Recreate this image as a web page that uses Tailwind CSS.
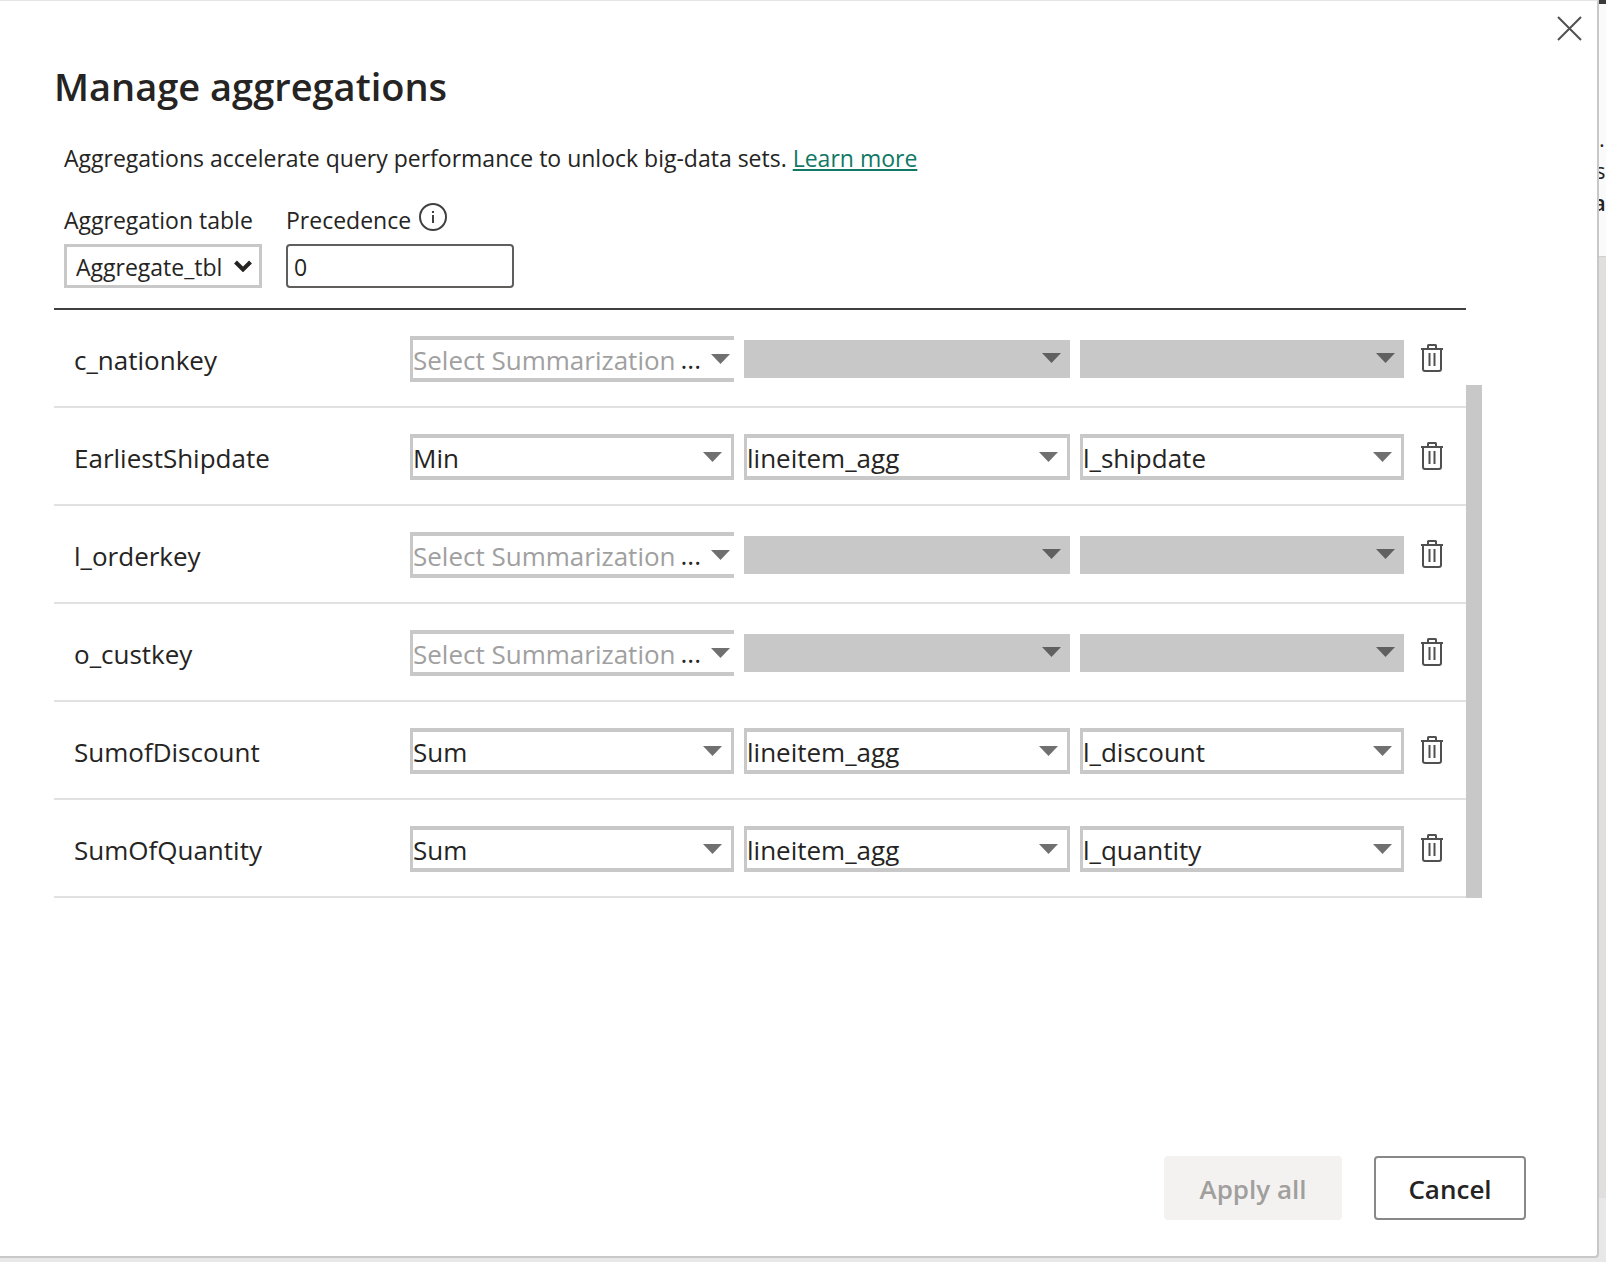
<!DOCTYPE html>
<html lang="en">
<head>
<meta charset="utf-8">
<title>Manage aggregations</title>
<script src="https://cdn.jsdelivr.net/npm/@tailwindcss/browser@4"></script>
</head>
<body class="bg-[#e8e8e8] font-['Open_Sans','Noto_Sans',sans-serif] text-[#252423]">
<svg class="hidden" aria-hidden="true">
  <symbol id="arrow" viewBox="0 0 19 10"><path d="M0 0h19L9.500 10z" fill="currentColor"/></symbol>
  <symbol id="trash" viewBox="0 0 22 28"><path d="M0 5H22M7 5V1.500Q7 1 7.500 1H14.500Q15 1 15 1.500V5M2 5V25Q2 27 4 27H18Q20 27 20 25V5M8.500 9V22M13.500 9V22" fill="none" stroke="currentColor" stroke-width="2"/></symbol>
</svg>
<div class="flex min-h-screen pb-1">
  <main role="dialog" aria-labelledby="title" class="flex min-w-0 flex-1 flex-col rounded-br border-t border-r-2 border-b-2 border-t-[#e5e5e5] border-r-[#c8c8c8] border-b-[#c8c8c8] bg-white">
    <div class="flex h-[59px] justify-end pt-[15px] pr-[15px]">
      <button type="button" aria-label="Close" class="size-[25px] text-[#505050]">
        <svg viewBox="0 0 25 25" class="size-full" fill="none" stroke="currentColor" stroke-width="2"><path d="M1 1L24 24M24 1L1 24"/></svg>
      </button>
    </div>
    <h1 id="title" class="px-[54px] text-[38px] leading-[52px] font-semibold">Manage aggregations</h1>
    <p class="mt-[30px] px-16 text-[23px] leading-8">Aggregations accelerate query performance to unlock big-data sets. <a href="#" class="text-[#117865] underline">Learn more</a></p>
    <div class="mt-[27px] flex gap-6 px-16 text-[23px]">
      <div class="flex w-[198px] flex-col">
        <label for="table" class="leading-[38px] whitespace-nowrap">Aggregation table</label>
        <div class="relative mt-[5px] h-11">
          <select id="table" class="size-full appearance-none border-3 border-[#c8c8c8] bg-white pt-0.5 pl-[9px]"><option>Aggregate_tbl</option></select>
          <svg viewBox="0 0 18 12" class="pointer-events-none absolute top-4 right-2.5 h-3 w-[18px]" fill="none" stroke="currentColor" stroke-width="4"><path d="M1.500 2L9 9.500L16.500 2"/></svg>
        </div>
      </div>
      <div class="flex w-[228px] flex-col">
        <div class="flex h-[38px] items-start gap-2">
          <label for="precedence" class="leading-[38px]">Precedence</label>
          <svg viewBox="0 0 28 28" class="mt-0.5 size-7 text-[#404040]" fill="none" stroke="currentColor" stroke-width="2"><circle cx="14" cy="14" r="13"/><path d="M14 12V20M14 8V10"/></svg>
        </div>
        <input id="precedence" value="0" class="mt-[5px] h-11 w-full rounded-sm border-2 border-[#605e5c] bg-white px-1.5 pt-0.5">
      </div>
    </div>
    <section class="mt-5 flex pr-[115px] pl-[54px]">
      <table class="min-w-0 flex-1 table-fixed border-t-2 border-[#404040] text-[26px]">
        <colgroup><col><col class="w-[334px]"><col class="w-[336px]"><col class="w-[324px]"><col class="w-[62px]"></colgroup>
        <tbody id="rows"></tbody>
      </table>
      <div class="w-4 pt-[77px]"><div class="h-full bg-[#c8c8c8]"></div></div>
    </section>
    <footer class="mt-auto flex justify-end gap-8 pr-[71px] pb-9 text-[26px] font-semibold">
      <button type="button" disabled class="h-16 w-[178px] rounded bg-[#f3f2f1] pt-0.5 text-[#a19f9d]">Apply all</button>
      <button type="button" class="h-16 w-[152px] rounded border-2 border-[#8a8886] bg-white pt-0.5">Cancel</button>
    </footer>
  </main>
  <aside aria-hidden="true" class="flex w-[7px] flex-col overflow-hidden bg-[#e1dfdd]">
    <div class="h-1 bg-[#3b3a39]"></div>
    <div class="h-[253px] border-b border-[#d0d0d0] bg-[#fafafa] pt-[118px] text-[22px] leading-8">
      <p>.</p>
      <p class="-ml-1 whitespace-nowrap">si</p>
      <p class="-ml-1.5 font-semibold">a</p>
    </div>
    <div class="mt-auto h-[60px] bg-[#e8e8e8]"></div>
  </aside>
</div>
<script>
  const rows = [
    ['c_nationkey'],
    ['EarliestShipdate', 'Min', 'lineitem_agg', 'l_shipdate'],
    ['l_orderkey'],
    ['o_custkey'],
    ['SumofDiscount', 'Sum', 'lineitem_agg', 'l_discount'],
    ['SumOfQuantity', 'Sum', 'lineitem_agg', 'l_quantity'],
  ];
  const arrow = '<svg class="h-2.5 w-[19px]"><use href="#arrow"/></svg>';
  const filled = (label, value) => `<div class="relative h-[46px]"><select aria-label="${label}" class="size-full appearance-none border-x-3 border-y-4 border-[#c8c8c8] bg-white pt-px"><option>${value}</option></select><span class="pointer-events-none absolute top-[18px] right-3 text-[#707070]">${arrow}</span></div>`;
  const empty = (label) => `<div class="relative h-[46px]"><select aria-label="${label}" class="size-full appearance-none border-y-4 border-l-3 border-[#c8c8c8] bg-white pt-px text-[#a0a0a0]"><option>Select Summarization</option></select><span class="pointer-events-none absolute inset-y-0 right-1 flex items-center gap-2.5 text-[#707070]"><span class="text-[#252423]">...</span>${arrow}</span></div>`;
  const disabled = (label) => `<div class="relative h-[38px]"><select aria-label="${label}" disabled class="size-full appearance-none bg-[#c8c8c8] opacity-100"><option></option></select><span class="pointer-events-none absolute top-[13px] right-[9px] text-[#606060]">${arrow}</span></div>`;
  document.getElementById('rows').innerHTML = rows.map(([name, sum, table, column]) => `
    <tr class="h-[98px] border-b-2 border-[#e1e1e1]">
      <th scope="row" class="pt-1 pl-5 text-left font-normal">${name}</th>
      <td class="pt-0.5 pr-2.5">${sum ? filled('Summarization', sum) : empty('Summarization')}</td>
      <td class="pt-0.5 pr-2.5">${table ? filled('Detail table', table) : disabled('Detail table')}</td>
      <td class="pt-0.5">${column ? filled('Detail column', column) : disabled('Detail column')}</td>
      <td class="pl-[17px]"><button type="button" aria-label="Delete" class="block h-7 w-[22px] text-[#505050]"><svg class="size-full"><use href="#trash"/></svg></button></td>
    </tr>`).join('');
</script>
</body>
</html>
